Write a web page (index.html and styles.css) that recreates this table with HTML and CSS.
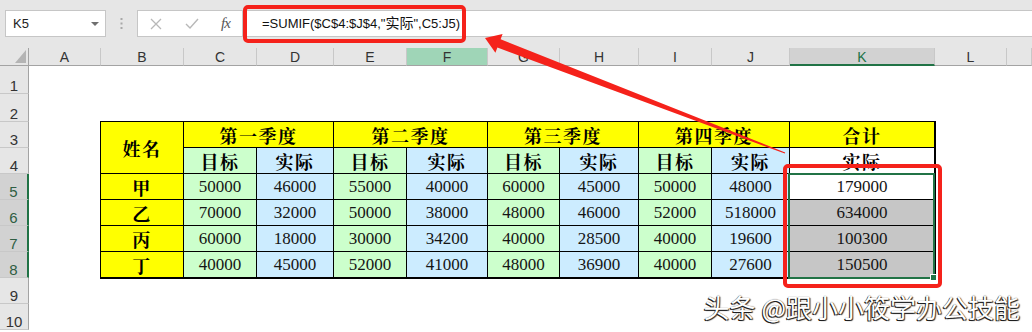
FILE: index.html
```html
<!DOCTYPE html>
<html lang="zh">
<head>
<meta charset="utf-8">
<title>SUMIF</title>
<link rel="stylesheet" href="styles.css">
</head>
<body>
<div class="app">
  <div class="fbar">
    <div class="namebox">
      <span>K5</span>
      <svg class="dd" width="8" height="4" viewBox="0 0 8 4"><polygon points="0,0 8,0 4,4" fill="#6f6f6f"/></svg>
    </div>
    <div class="grip">
      <svg width="3" height="11" viewBox="0 0 3 11"><rect x="0.5" y="0" width="2" height="2" fill="#a8a8a8"/><rect x="0.5" y="4.5" width="2" height="2" fill="#a8a8a8"/><rect x="0.5" y="9" width="2" height="2" fill="#a8a8a8"/></svg>
    </div>
    <div class="fxtools">
      <svg class="ico-x" width="12" height="12" viewBox="0 0 12 12"><path d="M1 1 L11 11 M11 1 L1 11" stroke="#b8b8b8" stroke-width="1.3" fill="none"/></svg>
      <svg class="ico-ok" width="14" height="11" viewBox="0 0 14 11"><path d="M1 6 L5 10 L13 1" stroke="#b8b8b8" stroke-width="1.4" fill="none"/></svg>
      <span class="fx">fx</span>
    </div>
    <div class="formula">=SUMIF($C$4:$J$4,"<span class="cjk">实际</span>",C5:J5)</div>
  </div>

  <div class="sheet">
    <div class="corner"><svg width="11" height="13" viewBox="0 0 11 13"><polygon points="11,0 11,13 0,13" fill="#b4b4b4"/></svg></div>
    <div class="ch">A</div>
    <div class="ch">B</div>
    <div class="ch">C</div>
    <div class="ch">D</div>
    <div class="ch">E</div>
    <div class="ch hl">F</div>
    <div class="ch">G</div>
    <div class="ch">H</div>
    <div class="ch">I</div>
    <div class="ch">J</div>
    <div class="ch on">K</div>
    <div class="ch">L</div>
    <div class="ch"></div>

    <div class="rh">1</div>
    <div class="rh">2</div>
    <div class="rh">3</div>
    <div class="rh">4</div>
    <div class="rh on">5</div>
    <div class="rh on">6</div>
    <div class="rh on">7</div>
    <div class="rh on">8</div>
    <div class="rh">9</div>
    <div class="rh">10</div>

    <div class="tbl">
      <div class="c y hd name">姓名</div>
      <div class="c y hd q">第一季度</div>
      <div class="c y hd q">第二季度</div>
      <div class="c y hd q">第三季度</div>
      <div class="c y hd q">第四季度</div>
      <div class="c y hd">合计</div>

      <div class="c g hd">目标</div>
      <div class="c b hd">实际</div>
      <div class="c g hd">目标</div>
      <div class="c b hd">实际</div>
      <div class="c g hd">目标</div>
      <div class="c b hd">实际</div>
      <div class="c g hd">目标</div>
      <div class="c b hd">实际</div>
      <div class="c w hd">实际</div>

      <div class="c y hd">甲</div>
      <div class="c g n">50000</div>
      <div class="c b n">46000</div>
      <div class="c g n">55000</div>
      <div class="c b n">40000</div>
      <div class="c g n">60000</div>
      <div class="c b n">45000</div>
      <div class="c g n">50000</div>
      <div class="c b n">48000</div>
      <div class="c w n active">179000<div class="sel"></div></div>

      <div class="c y hd">乙</div>
      <div class="c g n">70000</div>
      <div class="c b n">32000</div>
      <div class="c g n">50000</div>
      <div class="c b n">38000</div>
      <div class="c g n">48000</div>
      <div class="c b n">46000</div>
      <div class="c g n">52000</div>
      <div class="c b n">518000</div>
      <div class="c s n">634000</div>

      <div class="c y hd">丙</div>
      <div class="c g n">60000</div>
      <div class="c b n">18000</div>
      <div class="c g n">30000</div>
      <div class="c b n">34200</div>
      <div class="c g n">40000</div>
      <div class="c b n">28500</div>
      <div class="c g n">40000</div>
      <div class="c b n">19600</div>
      <div class="c s n">100300</div>

      <div class="c y hd">丁</div>
      <div class="c g n">40000</div>
      <div class="c b n">45000</div>
      <div class="c g n">52000</div>
      <div class="c b n">41000</div>
      <div class="c g n">48000</div>
      <div class="c b n">36900</div>
      <div class="c g n">40000</div>
      <div class="c b n">27600</div>
      <div class="c s n">150500</div>
    </div>
  </div>

  <svg class="marks" width="1032" height="332" viewBox="0 0 1032 332">
    <rect x="245" y="7" width="219" height="34" rx="3" ry="3" fill="none" stroke="#f5221b" stroke-width="4"/>
    <rect x="785" y="166" width="155" height="120" rx="3" ry="3" fill="none" stroke="#f5221b" stroke-width="4"/>
    <polygon points="485,38 502.6,34 500.6,39.2 785.2,152.4 784.8,153.6 497.4,47.6 495.4,52.7" fill="#f5221b"/>
  </svg>

  <div class="wm">头条 @跟小小筱学办公技能</div>
</div>
</body>
</html>
```

FILE: styles.css
```css
body {
  margin: 0;
  background: #ffffff;
}

.app {
  position: relative;
  width: 1032px;
  height: 332px;
  overflow: hidden;
  font-family: "Liberation Sans", "Noto Sans CJK SC", sans-serif;
  background: #ffffff;
}

/* ---------- formula bar ---------- */
.fbar {
  height: 48px;
  box-sizing: border-box;
  padding-top: 10px;
  background: #e6e6e6;
  display: flex;
  align-items: flex-start;
}

.namebox {
  margin-left: 5px;
  width: 101px;
  height: 27px;
  box-sizing: border-box;
  background: #ffffff;
  border: 1px solid #c6c6c6;
  display: flex;
  align-items: center;
  justify-content: space-between;
  padding: 0 6px 0 7px;
  font-size: 13px;
  color: #222222;
}

.grip {
  width: 31px;
  height: 27px;
  display: flex;
  align-items: center;
  justify-content: center;
}

.fxtools {
  width: 105px;
  height: 27px;
  box-sizing: border-box;
  background: #ffffff;
  border: 1px solid #c6c6c6;
  border-right: none;
  display: flex;
  align-items: center;
  padding-left: 12px;
}

.ico-x { margin-right: 23px; }
.ico-ok { margin-right: 22px; }

.fx {
  font-family: "Liberation Serif", serif;
  font-style: italic;
  font-size: 15px;
  color: #555555;
  letter-spacing: -1px;
}

.formula {
  flex: 1;
  height: 27px;
  box-sizing: border-box;
  background: #ffffff;
  border: 1px solid #c6c6c6;
  border-right: none;
  padding-left: 19px;
  font-size: 13px;
  line-height: 25px;
  color: #111111;
  white-space: nowrap;
}

.cjk {
  font-size: 14px;
}

/* ---------- sheet ---------- */
.sheet {
  display: grid;
  grid-template-columns: 29px 72px 83px 73px 77px 73px 81px 72px 79px 73px 78px 145px 72px 1fr;
  grid-template-rows: 18px 28px 28px repeat(8, 26px);
}

.corner {
  background: #e6e6e6;
  border-right: 1px solid #a3a3a3;
  border-bottom: 1px solid #a3a3a3;
  box-sizing: border-box;
  display: flex;
  justify-content: flex-end;
  align-items: flex-end;
  padding: 0 2px 2px 0;
}

.ch {
  background: #e6e6e6;
  border-right: 1px solid #c8c8c8;
  border-bottom: 1px solid #a3a3a3;
  box-sizing: border-box;
  font-size: 14px;
  line-height: 17px;
  padding-top: 1px;
  text-align: center;
  color: #333333;
}

.ch.hl {
  background: #9fd5b7;
}

.ch.on {
  background: #d2d2d2;
  border-bottom: 2px solid #217346;
  color: #217346;
}

.rh {
  grid-column: 1;
  background: #e6e6e6;
  border-right: 1px solid #a3a3a3;
  border-bottom: 1px solid #c8c8c8;
  box-sizing: border-box;
  font-size: 15px;
  line-height: 14px;
  color: #333333;
  display: flex;
  align-items: flex-end;
  justify-content: center;
}

.rh.on {
  background: #d2d2d2;
  border-right: 2px solid #217346;
  color: #2f5e43;
}

/* ---------- data table ---------- */
.tbl {
  grid-column: 3 / 13;
  grid-row: 4 / 10;
  display: grid;
  grid-template-columns: 83px 73px 77px 73px 81px 72px 79px 73px 78px 145px;
  grid-auto-rows: 26px;
  outline: 1px solid #000000;
}

.c {
  box-sizing: border-box;
  border-right: 1px solid #000000;
  border-bottom: 1px solid #000000;
  display: flex;
  align-items: center;
  justify-content: center;
}

.name { grid-row: span 2; }
.q { grid-column: span 2; }

.y { background: #ffff00; }
.g { background: #ccffcc; }
.b { background: #ccecff; }
.w { background: #ffffff; }
.s { background: #c6c6c6; }

.hd {
  font-family: "Noto Serif CJK SC", "Noto Sans CJK SC", serif;
  font-weight: 700;
  font-size: 18px;
  letter-spacing: 1.5px;
  color: #000000;
}

.n {
  font-family: "Liberation Serif", serif;
  font-size: 17px;
  color: #151515;
}

.active {
  position: relative;
}

.sel {
  position: absolute;
  left: -2px;
  top: -1px;
  width: 147px;
  height: 106px;
  box-sizing: border-box;
  border: 2px solid #217346;
  z-index: 2;
}

.sel::after {
  content: "";
  position: absolute;
  right: -3px;
  bottom: -3px;
  width: 5px;
  height: 5px;
  background: #217346;
  border-left: 1px solid #ffffff;
  border-top: 1px solid #ffffff;
}

/* ---------- annotations ---------- */
.marks {
  position: absolute;
  left: 0;
  top: 0;
  z-index: 5;
  pointer-events: none;
}

.wm {
  position: absolute;
  right: 12px;
  top: 292px;
  z-index: 6;
  font-family: "Noto Sans CJK SC", sans-serif;
  font-size: 26px;
  line-height: 30px;
  color: #ffffff;
  white-space: nowrap;
  text-shadow: -1px 1px 0 #1e1e1e, 1px 1px 1px #2a2a2a, 0 0 1px #444444;
}
```
